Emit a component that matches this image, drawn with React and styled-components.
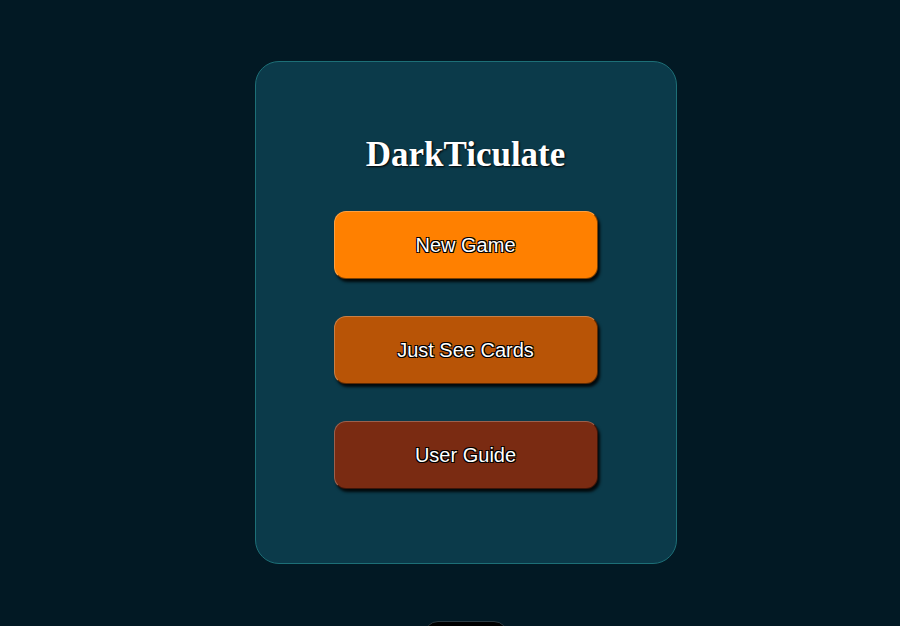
import React from "react";
import styled, { createGlobalStyle } from "styled-components";

const Global = createGlobalStyle`
  html, body {
    margin: 0;
    padding: 0;
    background: #021924;
    height: 100%;
    overflow: hidden;
  }
`;

const Page = styled.div`
  display: flex;
  flex-direction: column;
  align-items: center;
  padding-top: 61px;
  padding-left: 31px;
`;

const Card = styled.div`
  box-sizing: border-box;
  width: 422px;
  height: 503px;
  border: 1px solid #1d6f77;
  border-radius: 24px;
  background: #0b3a4a;
  display: flex;
  flex-direction: column;
  align-items: center;
  padding-top: 73px;
`;

const Title = styled.h1`
  margin: 0 0 37px;
  height: 39px;
  line-height: 39px;
  font-family: "Liberation Serif", "Times New Roman", serif;
  font-weight: bold;
  font-size: 35px;
  color: #ffffff;
  text-shadow: 1px 1px 2px #000;
`;

const Menu = styled.div`
  display: flex;
  flex-direction: column;
  gap: 37px;
`;

const MenuButton = styled.button`
  box-sizing: border-box;
  width: 264px;
  height: 68px;
  border-radius: 12px;
  border: 1px solid rgba(255, 255, 255, 0.25);
  border-right-color: rgba(0, 0, 0, 0.5);
  border-bottom-color: rgba(0, 0, 0, 0.5);
  background: ${(p) => p.$bg};
  box-shadow: 2px 3px 3px rgba(0, 0, 0, 0.85);
  font-family: "Liberation Sans", Arial, sans-serif;
  font-size: 20px;
  color: #fff;
  text-shadow: -1px -1px 0 #000, 1px -1px 0 #000, -1px 1px 0 #000, 1px 1px 0 #000;
  cursor: pointer;
`;

const FooterButton = styled.button`
  margin-top: 57px;
  width: 84px;
  height: 40px;
  border-radius: 14px;
  border: 1px solid #2b3a42;
  background: #000;
`;

export default function App() {
  return (
    <>
      <Global />
      <Page>
        <Card>
          <Title>DarkTiculate</Title>
          <Menu>
            <MenuButton $bg="#ff8000">New Game</MenuButton>
            <MenuButton $bg="#b85406">Just See Cards</MenuButton>
            <MenuButton $bg="#7a2b12">User Guide</MenuButton>
          </Menu>
        </Card>
        <FooterButton aria-label="footer" />
      </Page>
    </>
  );
}
